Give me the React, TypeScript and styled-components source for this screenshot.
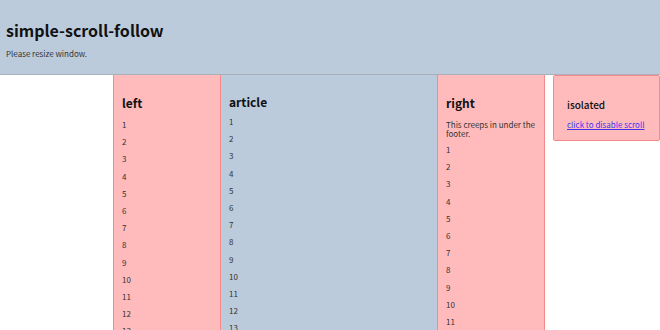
import styled, { createGlobalStyle } from 'styled-components';

const GlobalStyle = createGlobalStyle`
  html, body {
    margin: 0;
    padding: 0;
    background: #fff;
    overflow: hidden;
  }
  body {
    font-family: "Noto Sans CJK JP", "DejaVu Sans", sans-serif;
    color: #333;
  }
`;

const Header = styled.header`
  height: 75px;
  background-color: #bccbdc;
  border-bottom: 1px solid #a9b0b8;
  padding: 18px 6px 0;
  box-sizing: border-box;
`;

const Title = styled.h1`
  margin: 0;
  font-size: 16px;
  line-height: 24px;
  font-weight: bold;
  color: #111;
`;

const Note = styled.p`
  margin: 7px 0 0;
  font-size: 8px;
  line-height: 10px;
  color: #333;
`;

const Main = styled.div`
  display: flex;
  align-items: flex-start;
  padding-left: 113px;
`;

const Side = styled.aside`
  width: 108px;
  height: 400px;
  box-sizing: border-box;
  background-color: #ffbbbb;
  border: 1px solid #f58a8a;
  border-top: none;
  padding: 19px 8px 0 8px;
`;

const Article = styled.article`
  width: 216px;
  height: 400px;
  box-sizing: border-box;
  background-color: #bccbdc;
  padding: 18px 8px 0;
`;

const Heading = styled.h2<{ $gap?: number }>`
  margin: 0 0 ${(p) => p.$gap ?? 8}px;
  font-size: 12px;
  line-height: 18px;
  font-weight: bold;
  color: #111;
`;

const Line = styled.p`
  margin: 0;
  height: 17.2px;
  font-size: 8px;
  line-height: 10px;
`;

const Text = styled.p`
  margin: 0 0 7px;
  font-size: 8px;
  line-height: 9px;
`;

const Isolated = styled.div`
  margin-left: 8px;
  width: 107px;
  height: 66px;
  box-sizing: border-box;
  background-color: #ffbbbb;
  border: 1px solid #f58a8a;
  border-radius: 2px;
  padding: 22px 13px 0;
`;

const SmallHeading = styled.h3`
  margin: 0 0 8px;
  font-size: 10px;
  line-height: 14px;
  font-weight: 500;
  color: #111;
`;

const LinkLine = styled.p`
  margin: 0;
  font-size: 8px;
  line-height: 10px;
`;

const Toggle = styled.a`
  color: #4433ee;
  text-decoration: underline;
`;

const nums = (n: number) => Array.from({ length: n }, (_, i) => i + 1);

export default function App() {
  return (
    <>
      <GlobalStyle />
      <Header>
        <Title>simple-scroll-follow</Title>
        <Note>Please resize window.</Note>
      </Header>
      <Main>
        <Side>
          <Heading>left</Heading>
          {nums(13).map((n) => (
            <Line key={n}>{n}</Line>
          ))}
        </Side>
        <Article>
          <Heading $gap={6}>article</Heading>
          {nums(13).map((n) => (
            <Line key={n}>{n}</Line>
          ))}
        </Article>
        <Side>
          <Heading>right</Heading>
          <Text>This creeps in under the footer.</Text>
          {nums(11).map((n) => (
            <Line key={n}>{n}</Line>
          ))}
        </Side>
        <Isolated>
          <SmallHeading>isolated</SmallHeading>
          <LinkLine>
            <Toggle href="#">click to disable scroll</Toggle>
          </LinkLine>
        </Isolated>
      </Main>
    </>
  );
}
